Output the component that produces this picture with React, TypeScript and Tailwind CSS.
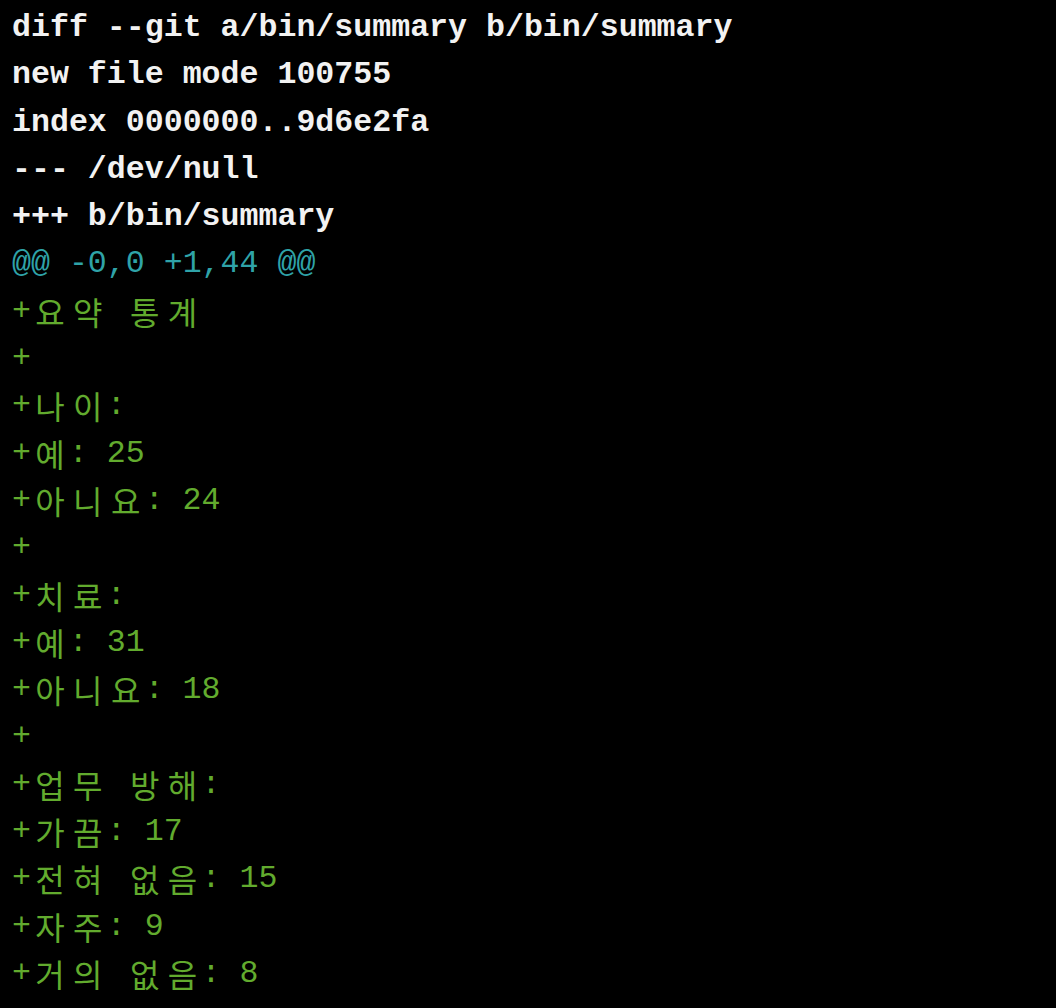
/**
 * Terminal diff — a new file added with Korean summary stats.
 * Monospace grid; Hangul takes two cells like in a real terminal.
 */
const header = [
  "diff --git a/bin/summary b/bin/summary",
  "new file mode 100755",
  "index 0000000..9d6e2fa",
  "--- /dev/null",
  "+++ b/bin/summary",
];

const added = [
  "요약 통계",
  "",
  "나이:",
  "예: 25",
  "아니요: 24",
  "",
  "치료:",
  "예: 31",
  "아니요: 18",
  "",
  "업무 방해:",
  "가끔: 17",
  "전혀 없음: 15",
  "자주: 9",
  "거의 없음: 8",
];

const isWide = (ch: string) => /[\u1100-\u11ff\u3130-\u318f\uac00-\ud7af]/.test(ch);

function Cells({ text }: { text: string }) {
  return (
    <>
      {Array.from(text).map((ch, i) =>
        isWide(ch) ? (
          <span
            key={i}
            className="inline-block h-[47.3px] w-[37.92px] overflow-visible text-center align-top font-['Noto_Sans_CJK_KR',sans-serif] text-[32px] leading-[47.3px]"
          >
            {ch}
          </span>
        ) : (
          <span key={i} className="inline-block h-[47.3px] w-[18.96px] align-top leading-[47.3px]">
            {ch === " " ? "\u00a0" : ch}
          </span>
        )
      )}
    </>
  );
}

export default function App() {
  return (
    <div className="min-h-[1008px] w-[1056px] bg-black pl-3 pt-[4px] font-['Liberation_Mono','Noto_Sans_CJK_KR',monospace] text-[31.6px] leading-[47.3px] whitespace-pre">
      {header.map((line) => (
        <div key={line} className="h-[47.3px] font-bold text-[#f2f2f2]">
          {line}
        </div>
      ))}
      <div className="h-[47.3px] text-[#2fa3a8]">@@ -0,0 +1,44 @@</div>
      {added.map((line, i) => (
        <div key={i} className="h-[47.3px] overflow-visible text-[#62ab2e]">
          <Cells text={"+" + line} />
        </div>
      ))}
    </div>
  );
}
